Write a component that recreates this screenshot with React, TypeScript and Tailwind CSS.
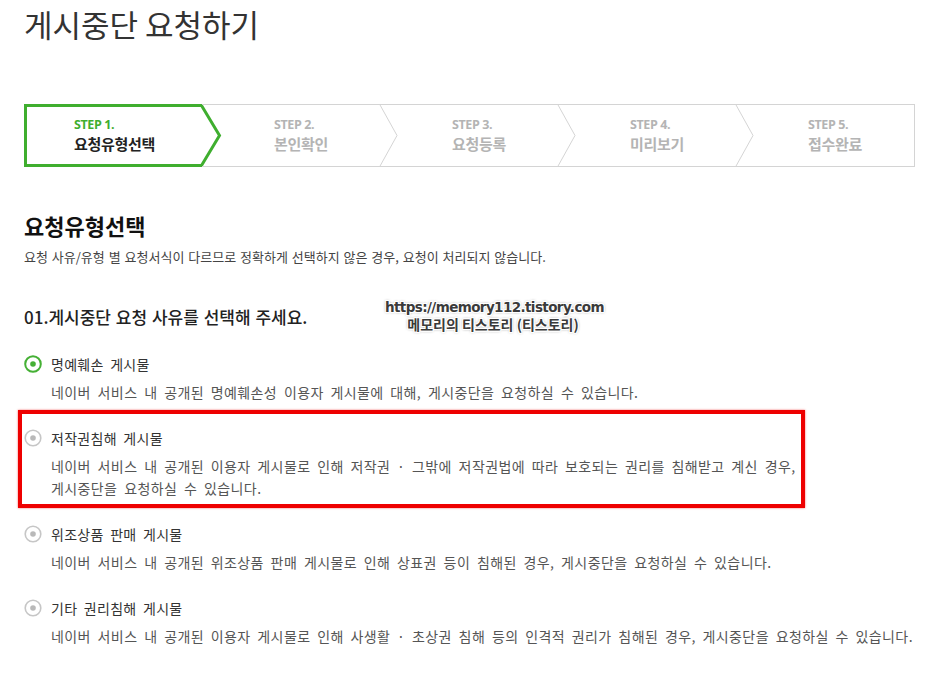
import React from "react";

const steps = [
  { no: "STEP 1.", label: "요청유형선택" },
  { no: "STEP 2.", label: "본인확인" },
  { no: "STEP 3.", label: "요청등록" },
  { no: "STEP 4.", label: "미리보기" },
  { no: "STEP 5.", label: "접수완료" },
];

const options = [
  {
    title: "명예훼손 게시물",
    desc: ["네이버 서비스 내 공개된 명예훼손성 이용자 게시물에 대해, 게시중단을 요청하실 수 있습니다."],
  },
  {
    title: "저작권침해 게시물",
    desc: [
      "네이버 서비스 내 공개된 이용자 게시물로 인해 저작권 · 그밖에 저작권법에 따라 보호되는 권리를 침해받고 계신 경우,",
      "게시중단을 요청하실 수 있습니다.",
    ],
    marked: true,
  },
  {
    title: "위조상품 판매 게시물",
    desc: ["네이버 서비스 내 공개된 위조상품 판매 게시물로 인해 상표권 등이 침해된 경우, 게시중단을 요청하실 수 있습니다."],
  },
  {
    title: "기타 권리침해 게시물",
    desc: ["네이버 서비스 내 공개된 이용자 게시물로 인해 사생활 · 초상권 침해 등의 인격적 권리가 침해된 경우, 게시중단을 요청하실 수 있습니다."],
  },
];

function Radio({ checked }: { checked: boolean }) {
  const color = checked ? "#45b035" : "#c6c6c6";
  return (
    <svg width="18" height="18" viewBox="0 0 18 18" className="shrink-0">
      <circle cx="9" cy="9" r="7.8" fill="white" stroke={color} strokeWidth={checked ? 2 : 1.6} />
      <circle cx="9" cy="9" r="2.8" fill={checked ? "#45b035" : "#b9b9b9"} />
    </svg>
  );
}

function StepBar() {
  return (
    <div className="mt-[59px] flex h-[63px]">
      {steps.map((s, i) => {
        const active = i === 0;
        const last = i === steps.length - 1;
        return (
          <div
            key={s.no}
            className={`relative flex h-[63px] flex-col justify-center border-y border-[#d4d4d4] ${
              last ? "flex-1 border-r pl-[72px]" : "w-[178px]"
            } ${i === 0 ? "pl-[50px]" : "pl-[72px]"}`}
          >
            <span
              className={`font-['Open_Sans',sans-serif] text-[12.5px] font-bold leading-[16px] tracking-[-0.4px] ${
                active ? "text-[#3fae2f]" : "text-[#b4b4b4]"
              }`}
            >
              {s.no}
            </span>
            <span
              className={`text-[15px] font-bold leading-[21px] tracking-[-0.3px] ${
                active ? "text-[#222]" : "text-[#b4b4b4]"
              }`}
            >
              {s.label}
            </span>
            {!last && !active && (
              <svg
                width="19"
                height="63"
                viewBox="0 0 19 63"
                className="absolute right-[-18px] top-[-1px]"
              >
                <polyline points="0.5,0 18,31.5 0.5,63" fill="none" stroke="#d4d4d4" strokeWidth="1" />
              </svg>
            )}
            {active && (
              <svg
                width="198"
                height="63"
                viewBox="0 0 198 63"
                className="absolute left-0 top-[-1px]"
              >
                <polygon
                  points="1.5,1.5 177.5,1.5 195.5,31.5 177.5,61.5 1.5,61.5"
                  fill="none"
                  stroke="#3fae2f"
                  strokeWidth="3"
                />
              </svg>
            )}
          </div>
        );
      })}
    </div>
  );
}

export default function App() {
  return (
    <div className="relative min-h-screen bg-white font-['Noto_Sans_CJK_KR',sans-serif]">
      <div className="ml-[24px] w-[891px]">
        <h1 className="mt-[3px] text-[31px] font-normal leading-[42px] text-[#333]">게시중단 요청하기</h1>

        <StepBar />

        <h2 className="mt-[43px] text-[22px] font-bold leading-[30px] text-[#111]">요청유형선택</h2>
        <p className="mt-[8px] text-[13px] leading-[18px] text-[#444] [word-spacing:1px]">
          요청 사유/유형 별 요청서식이 다르므로 정확하게 선택하지 않은 경우, 요청이 처리되지 않습니다.
        </p>

        <h3 className="mt-[39px] text-[17px] font-medium leading-[24px] text-[#222] [word-spacing:1px]">
          01.게시중단 요청 사유를 선택해 주세요.
        </h3>

        <div className="mt-[25px] flex flex-col gap-[25px]">
          {options.map((o, i) => (
            <div key={o.title} className="relative">
              <div className="flex h-[20px] items-center gap-[9px]">
                <Radio checked={i === 0} />
                <span className="text-[14px] leading-[20px] tracking-[0.3px] text-[#333] [word-spacing:3px]">
                  {o.title}
                </span>
              </div>
              <div className="mt-[7px] pl-[27px] text-[14px] leading-[22px] tracking-[0.4px] text-[#555] [word-spacing:3.2px]">
                {o.desc.map((line) => (
                  <div key={line} className="whitespace-nowrap">
                    {line}
                  </div>
                ))}
              </div>
              {o.marked && (
                <div className="pointer-events-none absolute left-[-6px] top-[-18px] h-[98px] w-[787px] border-[4px] border-[#ee0000] shadow-[0_0_2px_rgba(238,0,0,0.6)]" />
              )}
            </div>
          ))}
        </div>
      </div>

      <div className="pointer-events-none absolute left-[385px] top-[296px] w-[216px] text-center font-bold leading-[17px] text-[#3a3a3a] [text-shadow:1px_0_0_#fff,-1px_0_0_#fff,0_1px_0_#fff,0_-1px_0_#fff,1px_1px_0_#fff,-1px_-1px_0_#fff,1px_-1px_0_#fff,-1px_1px_0_#fff,0_0_3px_#555]">
        <div className="font-['DejaVu_Sans',sans-serif] text-[13.5px] tracking-[-0.6px]">https://memory112.tistory.com</div>
        <div className="text-[14px]">메모리의 티스토리 (티스토리)</div>
      </div>
    </div>
  );
}
